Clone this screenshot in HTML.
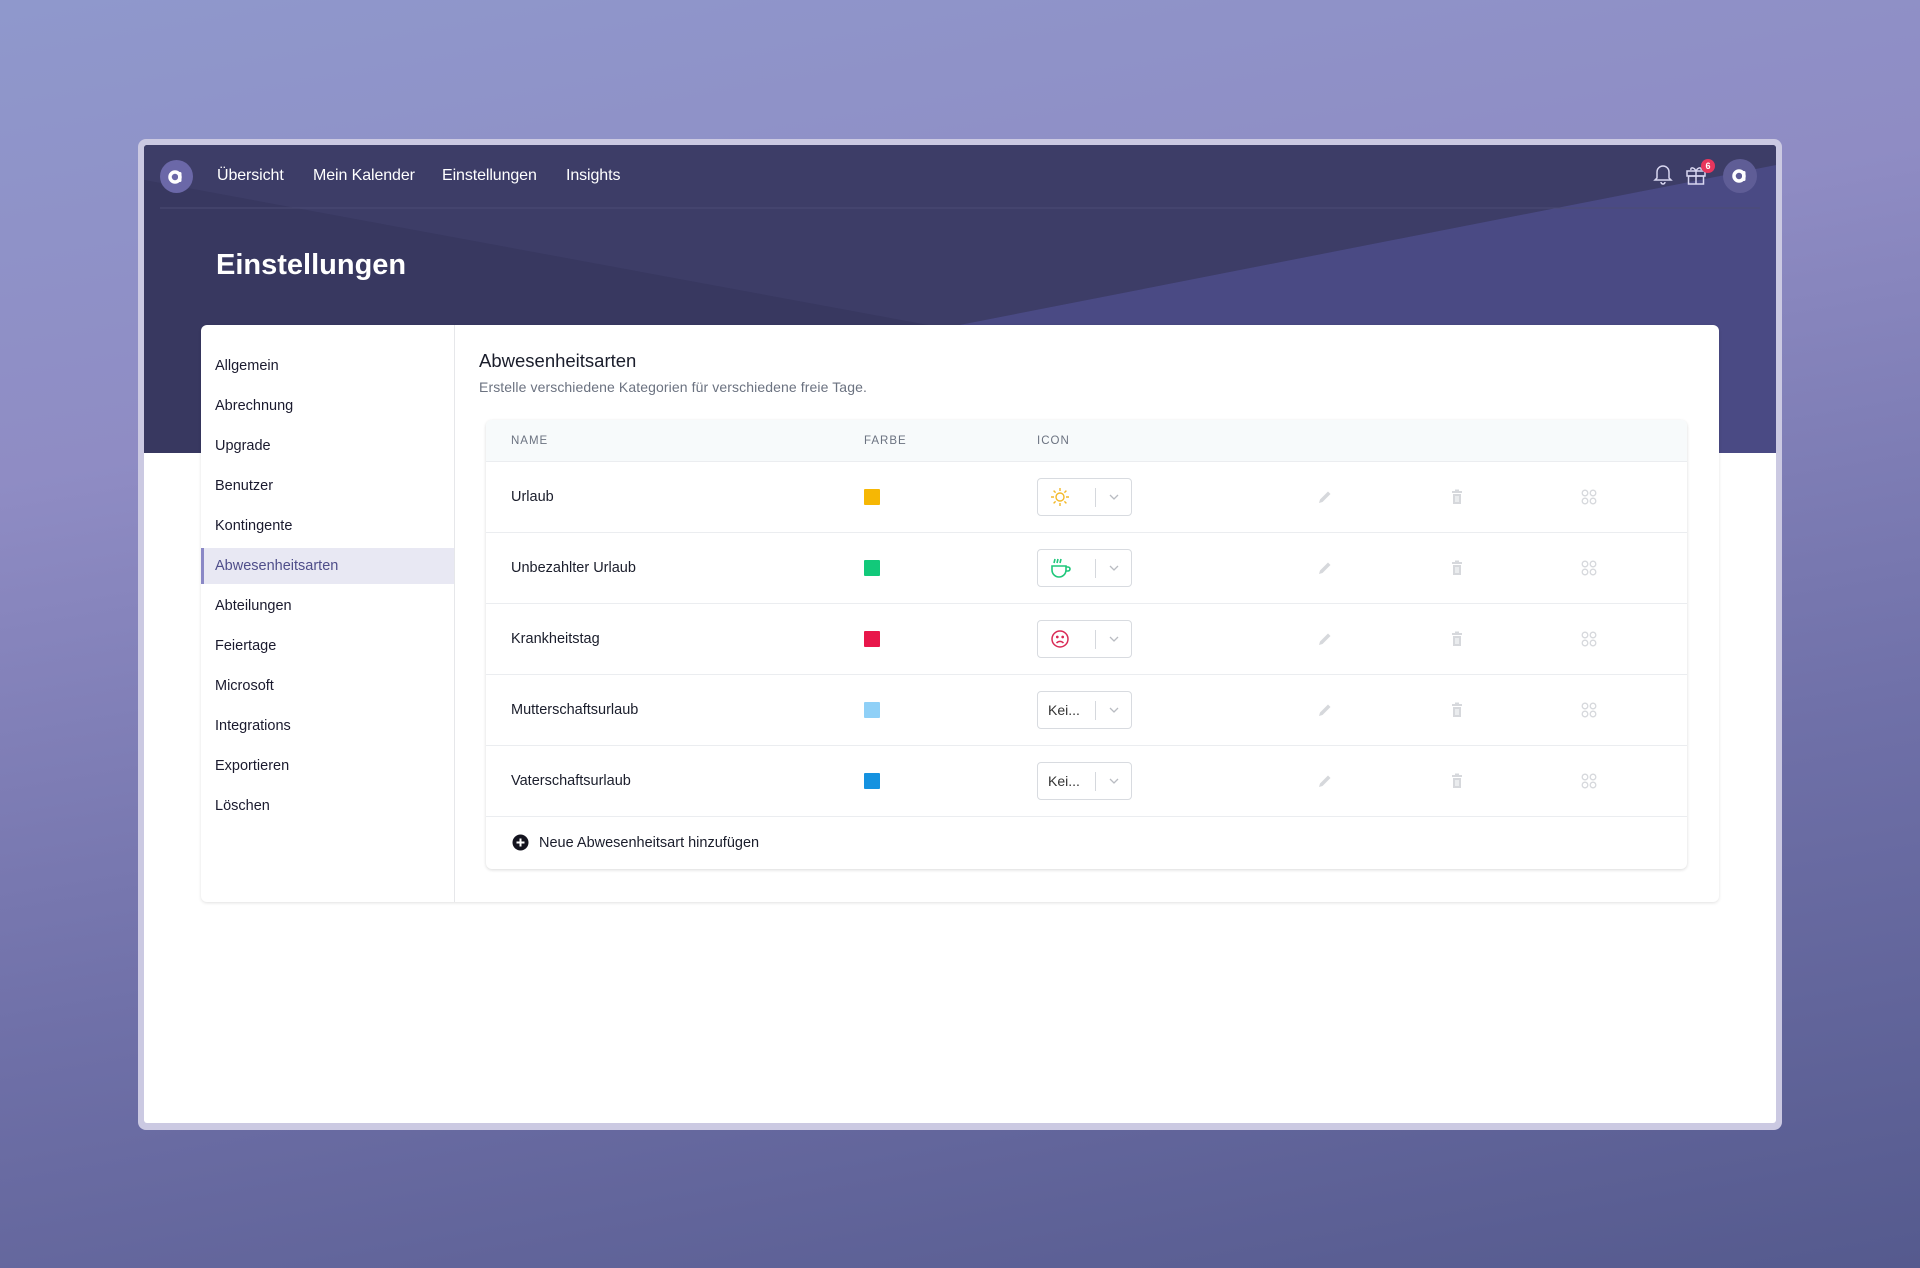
<!DOCTYPE html>
<html><head><meta charset="utf-8"><style>
*{margin:0;padding:0;box-sizing:border-box}
body{width:1920px;height:1268px;overflow:hidden;font-family:"Liberation Sans",sans-serif;background:linear-gradient(170deg,#8f98cc 0%,#8f8cc4 30%,#6f70a8 65%,#555a8e 100%);position:relative}
.abs{position:absolute}
.frame{left:138px;top:139px;width:1644px;height:991px;background:#cbc9e2;border-radius:8px}
.win{left:144px;top:145px;width:1632px;height:978px;background:#fff;overflow:hidden;border-radius:3px}
.nav{color:#fff;font-size:16px;top:167px;letter-spacing:-0.1px}
.side{left:215px;font-size:14.5px;color:#1a1a2e}
.row{left:486px;width:1201px;height:71px;border-top:1px solid #ebedf0}
.rt{left:25px;top:27px;font-size:14.5px;color:#1a1d2b}
.sq{left:378px;top:27px;width:16px;height:16px;border-radius:1px}
.sel{left:551px;top:16px;width:95px;height:38px;border:1px solid #d8dbe0;border-radius:4px;background:#fff}
.sel .d{position:absolute;left:57px;top:9px;width:1px;height:19px;background:#d5d8dd}
.sel .c{position:absolute;left:70px;top:12px}
.hd{font-size:11.5px;color:#6b7280;letter-spacing:1px;top:435px}
</style></head><body>
<div class="abs frame"></div>
<div class="abs win">
 <svg class="abs" style="left:0;top:0" width="1632" height="308">
  <rect width="1632" height="308" fill="#3a3a62"/>
  <polygon points="0,0 1632,0 1632,20 800,183 0,35" fill="#3d3d67"/>
  <polygon points="1632,20 1632,308 760,308 800,183" fill="#4a4a84"/>
  <polygon points="0,35 800,183 760,308 0,308" fill="#383860"/>
  <line x1="16" y1="63" x2="1616" y2="63" stroke="#4c4c74" stroke-width="1"/>
 </svg>
</div>
<!-- nav -->
<div class="abs" style="left:160px;top:160px;width:33px;height:33px;border-radius:50%;background:#6b68a8"></div>
<svg class="abs" style="left:167px;top:168px" width="18" height="18" viewBox="0 0 18 18"><circle cx="8" cy="9" r="5" fill="none" stroke="#fff" stroke-width="3.5"/><rect x="11" y="4" width="3.5" height="10" rx="1.5" fill="#fff"/></svg>
<div class="abs nav" style="left:217px">Übersicht</div>
<div class="abs nav" style="left:313px">Mein Kalender</div>
<div class="abs nav" style="left:442px">Einstellungen</div>
<div class="abs nav" style="left:566px">Insights</div>
<svg class="abs" style="left:1653px;top:163px" width="20" height="22" viewBox="0 0 20 22" fill="none" stroke="#d8d6f0" stroke-width="1.5"><path d="M4 15V9a6 6 0 0 1 12 0v6l2 2H2z"/><path d="M8 19a2 2 0 0 0 4 0"/></svg>
<svg class="abs" style="left:1685px;top:164px" width="22" height="22" viewBox="0 0 22 22" fill="none" stroke="#d8d6f0" stroke-width="1.5"><rect x="2" y="7" width="18" height="5"/><rect x="3.5" y="12" width="15" height="8"/><path d="M11 7v13M11 7C9 3 5 3 6 6M11 7c2-4 6-4 5-1"/></svg>
<div class="abs" style="left:1701px;top:159px;width:14px;height:14px;border-radius:50%;background:#e8365d;color:#fff;font-size:9px;font-weight:bold;text-align:center;line-height:14px">6</div>
<div class="abs" style="left:1723px;top:159px;width:34px;height:34px;border-radius:50%;background:#5f5d96"></div>
<svg class="abs" style="left:1731px;top:167px" width="18" height="18" viewBox="0 0 18 18"><circle cx="8" cy="9" r="5" fill="none" stroke="#fff" stroke-width="3.5"/><rect x="11" y="4" width="3.5" height="10" rx="1.5" fill="#fff"/></svg>
<div class="abs" style="left:216px;top:249px;font-size:29px;font-weight:bold;color:#fff">Einstellungen</div>
<!-- card -->
<div class="abs" style="left:201px;top:325px;width:1518px;height:577px;background:#fff;border-radius:6px;box-shadow:0 1px 3px rgba(0,0,0,.12)"></div>
<div class="abs" style="left:454px;top:325px;width:1px;height:577px;background:#e6e7ea"></div>
<div class="abs" style="left:201px;top:548px;width:253px;height:36px;background:#e8e8f3;border-left:3px solid #8a88c6"></div>
<div class="abs side" style="top:358px">Allgemein</div>
<div class="abs side" style="top:398px">Abrechnung</div>
<div class="abs side" style="top:438px">Upgrade</div>
<div class="abs side" style="top:478px">Benutzer</div>
<div class="abs side" style="top:518px">Kontingente</div>
<div class="abs side" style="top:558px;color:#4f4e8a">Abwesenheitsarten</div>
<div class="abs side" style="top:598px">Abteilungen</div>
<div class="abs side" style="top:638px">Feiertage</div>
<div class="abs side" style="top:678px">Microsoft</div>
<div class="abs side" style="top:718px">Integrations</div>
<div class="abs side" style="top:758px">Exportieren</div>
<div class="abs side" style="top:798px">Löschen</div>
<div class="abs" style="left:479px;top:350px;font-size:18.5px;color:#1a1d2b">Abwesenheitsarten</div>
<div class="abs" style="left:479px;top:379px;font-size:14px;color:#6b7280;letter-spacing:0.1px">Erstelle verschiedene Kategorien für verschiedene freie Tage.</div>
<!-- table -->
<div class="abs" style="left:486px;top:420px;width:1201px;height:449px;background:#fff;border-radius:6px;box-shadow:0 1px 3px rgba(0,0,0,.15)"></div>
<div class="abs" style="left:486px;top:420px;width:1201px;height:41px;background:#f7fafb;border-radius:6px 6px 0 0"></div>
<div class="abs hd" style="left:511px">NAME</div>
<div class="abs hd" style="left:864px">FARBE</div>
<div class="abs hd" style="left:1037px">ICON</div>

<div class="abs row" style="top:461px"><div class="abs rt">Urlaub</div><div class="abs sq" style="background:#f6b704"></div>
<div class="abs sel"><svg style="position:absolute;left:12px;top:8px" width="20" height="20" viewBox="0 0 20 20" fill="none" stroke="#f3b92a" stroke-width="1.4"><circle cx="10" cy="10" r="4"/><path d="M10 1v3M10 16v3M1 10h3M16 10h3M3.6 3.6l2 2M14.4 14.4l2 2M3.6 16.4l2-2M14.4 5.6l2-2"/></svg><div class="d"></div><svg class="c" width="12" height="12" viewBox="0 0 12 12" fill="none" stroke="#b9bcc2" stroke-width="1.3"><path d="M2 4l4 4 4-4"/></svg></div></div>

<div class="abs row" style="top:532px"><div class="abs rt">Unbezahlter Urlaub</div><div class="abs sq" style="background:#12c97a"></div>
<div class="abs sel"><svg style="position:absolute;left:11px;top:7px" width="24" height="22" viewBox="0 0 24 22" fill="none" stroke="#1ec77a" stroke-width="1.6"><path d="M6 2l-1 4M9 2l-1 4M12 2l-1 4"/><path d="M3 9h14v4a7 7 0 0 1-14 0z"/><path d="M17 10h2a2 2 0 0 1 0 4h-2"/></svg><div class="d"></div><svg class="c" width="12" height="12" viewBox="0 0 12 12" fill="none" stroke="#b9bcc2" stroke-width="1.3"><path d="M2 4l4 4 4-4"/></svg></div></div>

<div class="abs row" style="top:603px"><div class="abs rt">Krankheitstag</div><div class="abs sq" style="background:#e8164a"></div>
<div class="abs sel"><svg style="position:absolute;left:12px;top:8px" width="20" height="20" viewBox="0 0 20 20" fill="none" stroke="#d92a55" stroke-width="1.5"><circle cx="10" cy="10" r="8"/><circle cx="7.3" cy="8" r=".6" fill="#d92a55"/><circle cx="12.7" cy="8" r=".6" fill="#d92a55"/><path d="M6.5 14c2-2.2 5-2.2 7 0"/></svg><div class="d"></div><svg class="c" width="12" height="12" viewBox="0 0 12 12" fill="none" stroke="#b9bcc2" stroke-width="1.3"><path d="M2 4l4 4 4-4"/></svg></div></div>

<div class="abs row" style="top:674px"><div class="abs rt">Mutterschaftsurlaub</div><div class="abs sq" style="background:#8fd0f7"></div>
<div class="abs sel"><span style="position:absolute;left:10px;top:10px;font-size:14px;color:#333">Kei...</span><div class="d"></div><svg class="c" width="12" height="12" viewBox="0 0 12 12" fill="none" stroke="#b9bcc2" stroke-width="1.3"><path d="M2 4l4 4 4-4"/></svg></div></div>

<div class="abs row" style="top:745px"><div class="abs rt">Vaterschaftsurlaub</div><div class="abs sq" style="background:#1592e0"></div>
<div class="abs sel"><span style="position:absolute;left:10px;top:10px;font-size:14px;color:#333">Kei...</span><div class="d"></div><svg class="c" width="12" height="12" viewBox="0 0 12 12" fill="none" stroke="#b9bcc2" stroke-width="1.3"><path d="M2 4l4 4 4-4"/></svg></div></div>

<div class="abs row" style="top:816px;height:52px;border-radius:0 0 6px 6px">
<svg class="abs" style="left:26px;top:17px" width="17" height="17" viewBox="0 0 17 17"><circle cx="8.5" cy="8.5" r="8" fill="#14141f"/><path d="M8.5 4.5v8M4.5 8.5h8" stroke="#fff" stroke-width="2"/></svg>
<div class="abs" style="left:53px;top:18px;font-size:14.5px;color:#1a1d2b">Neue Abwesenheitsart hinzufügen</div></div>

<!-- action icons -->
<svg width="0" height="0" style="position:absolute"><defs>
<g id="pen"><path d="M2 14l1-3.5 8-8 2.5 2.5-8 8z" fill="#d6d8dc"/></g>
<g id="tr"><rect x="3" y="2" width="10" height="2" fill="#d6d8dc"/><rect x="6" y="0.5" width="4" height="2" fill="#d6d8dc"/><path d="M4 5h8v10H4z" fill="#d6d8dc"/><path d="M7 7v6M9 7v6" stroke="#fff" stroke-width="1"/></g>
<g id="gr" fill="none" stroke="#d6d8dc" stroke-width="1.3"><circle cx="4" cy="4" r="2.8"/><circle cx="12" cy="4" r="2.8"/><circle cx="4" cy="12" r="2.8"/><circle cx="12" cy="12" r="2.8"/></g>
</defs></svg>
<svg class="abs" style="left:1317px;top:489px" width="16" height="16"><use href="#pen"/></svg>
<svg class="abs" style="left:1449px;top:489px" width="16" height="16"><use href="#tr"/></svg>
<svg class="abs" style="left:1581px;top:489px" width="16" height="16"><use href="#gr"/></svg>
<svg class="abs" style="left:1317px;top:560px" width="16" height="16"><use href="#pen"/></svg>
<svg class="abs" style="left:1449px;top:560px" width="16" height="16"><use href="#tr"/></svg>
<svg class="abs" style="left:1581px;top:560px" width="16" height="16"><use href="#gr"/></svg>
<svg class="abs" style="left:1317px;top:631px" width="16" height="16"><use href="#pen"/></svg>
<svg class="abs" style="left:1449px;top:631px" width="16" height="16"><use href="#tr"/></svg>
<svg class="abs" style="left:1581px;top:631px" width="16" height="16"><use href="#gr"/></svg>
<svg class="abs" style="left:1317px;top:702px" width="16" height="16"><use href="#pen"/></svg>
<svg class="abs" style="left:1449px;top:702px" width="16" height="16"><use href="#tr"/></svg>
<svg class="abs" style="left:1581px;top:702px" width="16" height="16"><use href="#gr"/></svg>
<svg class="abs" style="left:1317px;top:773px" width="16" height="16"><use href="#pen"/></svg>
<svg class="abs" style="left:1449px;top:773px" width="16" height="16"><use href="#tr"/></svg>
<svg class="abs" style="left:1581px;top:773px" width="16" height="16"><use href="#gr"/></svg>
</body></html>
